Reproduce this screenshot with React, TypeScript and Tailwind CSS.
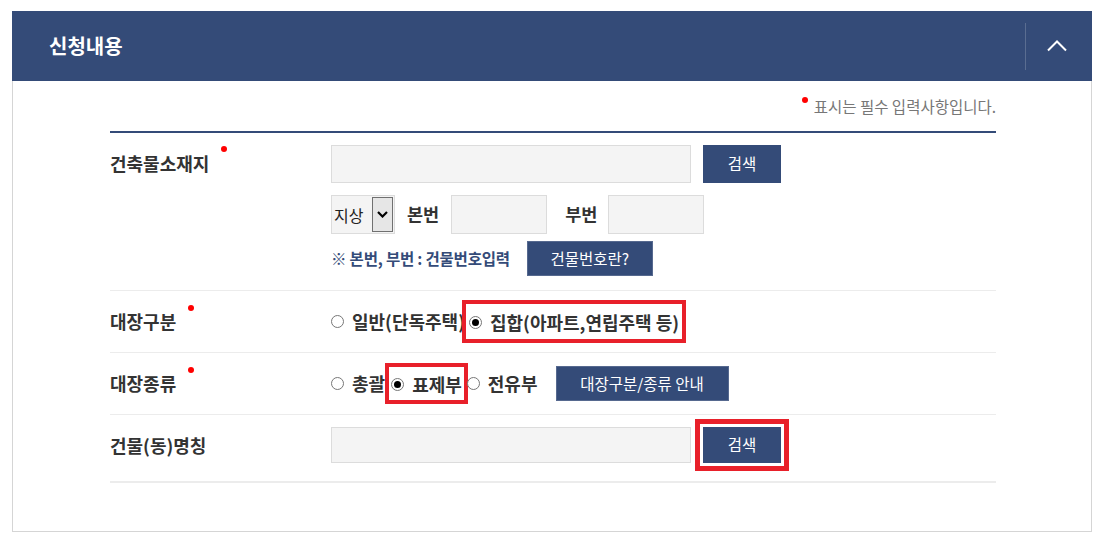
import type { ReactNode } from 'react';

const font = { fontFamily: '"Noto Sans CJK KR", "Noto Sans", sans-serif' };

function Dot() {
  return <span className="ml-[12px] -mt-[28px] inline-block h-[6px] w-[6px] rounded-full bg-[#f00]" />;
}

function Label({ text, required }: { text: string; required?: boolean }) {
  return (
    <div className="flex items-center text-[18px] font-bold text-[#333]">
      <span>{text}</span>
      {required ? <Dot /> : null}
    </div>
  );
}

function Radio({ label, checked }: { label: string; checked?: boolean }) {
  return (
    <span className="inline-flex items-center gap-[8px] text-[18px] font-bold leading-[27px] text-[#333]">
      <span className="flex h-[13px] w-[13px] items-center justify-center rounded-full border border-[#777] bg-white">
        {checked ? <span className="h-[7px] w-[7px] rounded-full bg-black" /> : null}
      </span>
      {label}
    </span>
  );
}

function NavyButton({ children, className }: { children: ReactNode; className: string }) {
  return (
    <button
      type="button"
      className={`flex items-center justify-center bg-[#344b78] text-[15.5px] text-white ${className}`}
    >
      {children}
    </button>
  );
}

function TextBox({ className }: { className: string }) {
  return <div className={`border border-[#dcdcdc] bg-[#f4f4f4] ${className}`} />;
}

function Row({ children, className }: { children: ReactNode; className: string }) {
  return <div className={`grid grid-cols-[221px_1fr] ${className}`}>{children}</div>;
}

export default function App() {
  return (
    <div className="min-h-[539px] bg-white pl-[12px] pt-[11px]" style={font}>
      <div className="w-[1080px]">
        <header className="flex h-[70px] items-center justify-between bg-[#344b78] pl-[37px]">
          <h2 className="text-[20px] font-bold text-white">신청내용</h2>
          <div className="flex h-[47px] items-center border-l border-[#5a6d91]">
            <button type="button" className="flex w-[66px] items-center justify-center pr-[4px] text-white">
              <svg width="20" height="12" viewBox="0 0 20 12" fill="none">
                <path d="M1 10.5 L10 1.5 L19 10.5" stroke="white" strokeWidth="2" />
              </svg>
            </button>
          </div>
        </header>

        <div className="border-x border-b border-[#d5d5d5] pb-[48px] pl-[97px] pr-[95px]">
          <p className="flex h-[50px] items-center justify-end pt-[2px] text-[15.5px] text-[#777]">
            <span className="-mt-[14px] mr-[6px] inline-block h-[6px] w-[6px] rounded-full bg-[#f00]" />
            표시는 필수 입력사항입니다.
          </p>

          <div className="border-t-2 border-[#344b78]">
            <Row className="border-b border-[#ececec] pb-[14px] pt-[12px]">
              <div className="flex h-[36px] items-center">
                <Label text="건축물소재지" required />
              </div>
              <div className="flex flex-col">
                <div className="flex gap-[12px]">
                  <TextBox className="h-[38px] w-[360px]" />
                  <NavyButton className="h-[38px] w-[78px]">검색</NavyButton>
                </div>
                <div className="mt-[12px] flex items-center">
                  <div className="flex h-[39px] w-[64px] items-center border border-[#dcdcdc] bg-[#f4f4f4] pl-[2px] text-[16px] text-[#222]">
                    <span className="flex-1">지상</span>
                    <span className="mr-[1px] flex h-[35px] w-[21px] items-center justify-center border border-[#707070] bg-[#e6e6e6]">
                      <svg width="11" height="7" viewBox="0 0 11 7" fill="none">
                        <path d="M1 1 L5.5 5.5 L10 1" stroke="black" strokeWidth="2.2" />
                      </svg>
                    </span>
                  </div>
                  <span className="ml-[12px] text-[17.5px] font-bold text-[#333]">본번</span>
                  <TextBox className="ml-[12px] h-[39px] w-[96px]" />
                  <span className="ml-[18px] text-[17.5px] font-bold text-[#333]">부번</span>
                  <TextBox className="ml-[11px] h-[39px] w-[96px]" />
                </div>
                <div className="mt-[7px] flex items-center">
                  <span className="text-[15.5px] font-semibold tracking-[-0.2px] text-[#344b78]">
                    ※ 본번, 부번 : 건물번호입력
                  </span>
                  <NavyButton className="ml-[17px] h-[35px] w-[126px] border border-[#56698f]">
                    건물번호란?
                  </NavyButton>
                </div>
              </div>
            </Row>

            <Row className="h-[62px] items-center border-b border-[#ececec]">
              <Label text="대장구분" required />
              <div className="flex items-center">
                <Radio label="일반(단독주택)" />
                <span className="ml-[4px] outline-4 outline-offset-[3px] outline-[#e8202a]">
                  <Radio label="집합(아파트,연립주택 등)" checked />
                </span>
              </div>
            </Row>

            <Row className="h-[62px] items-center border-b border-[#ececec]">
              <Label text="대장종류" required />
              <div className="flex items-center">
                <Radio label="총괄" />
                <span className="ml-[6px] outline-4 outline-offset-[2px] outline-[#e8202a]">
                  <Radio label="표제부" checked />
                </span>
                <span className="ml-[5px]">
                  <Radio label="전유부" />
                </span>
                <NavyButton className="ml-[18px] h-[35px] w-[173px] border border-[#56698f]">
                  대장구분/종류 안내
                </NavyButton>
              </div>
            </Row>

            <Row className="items-center border-b-2 border-[#ececec] pb-[18px] pt-[12px]">
              <Label text="건물(동)명칭" />
              <div className="flex items-center gap-[12px]">
                <TextBox className="h-[36px] w-[360px]" />
                <NavyButton className="h-[36px] w-[78px] outline-5 outline-offset-[3px] outline-[#e8202a]">
                  검색
                </NavyButton>
              </div>
            </Row>
          </div>
        </div>
      </div>
    </div>
  );
}
